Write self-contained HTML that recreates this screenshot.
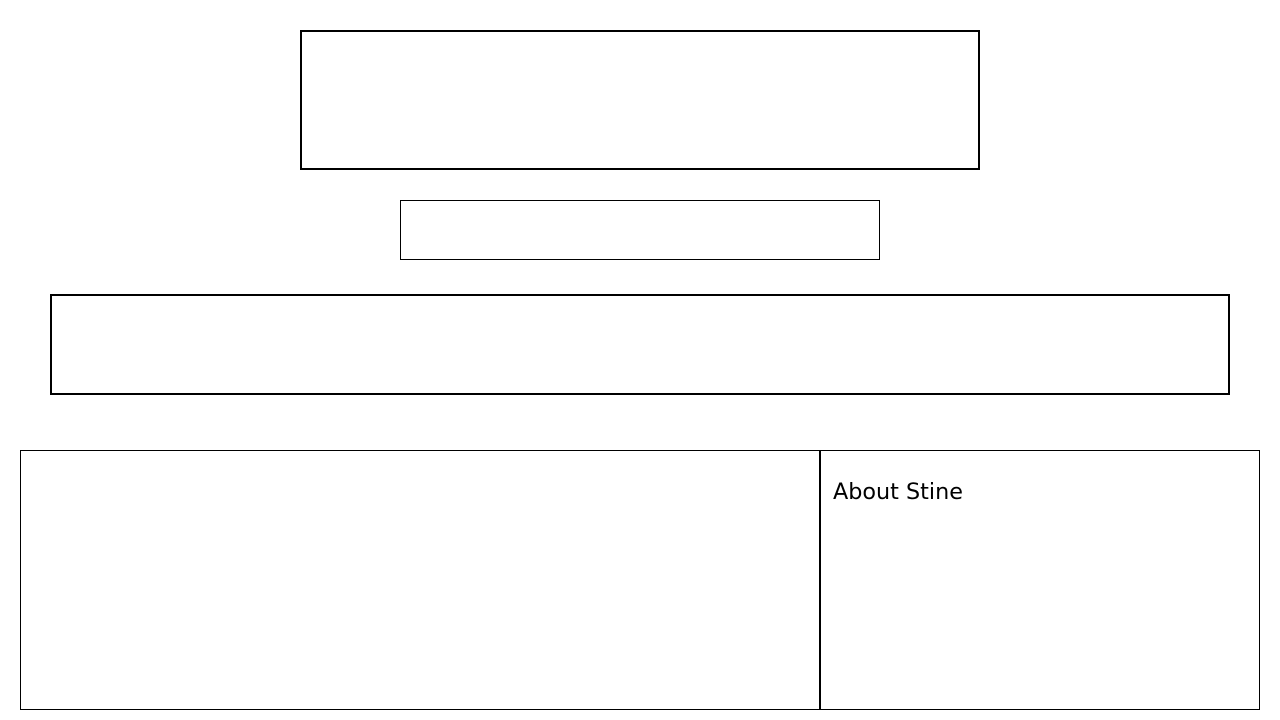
<!DOCTYPE html>
<html><head><style>
body{margin:0;width:1280px;height:720px;background:#fff;position:relative;overflow:hidden;font-family:"DejaVu Sans","Liberation Sans",sans-serif}
div{position:absolute;box-sizing:border-box;border:1px solid #000}
</style></head><body>
<div style="left:300px;top:30px;width:680px;height:140px;border-width:2px"></div>
<div style="left:400px;top:200px;width:480px;height:60px"></div>
<div style="left:50px;top:294px;width:1180px;height:101px;border-width:2px"></div>
<div style="left:20px;top:450px;width:801px;height:260px"></div>
<div style="left:819px;top:450px;width:441px;height:260px;border-left-width:2px"></div>
<span style="position:absolute;left:833px;top:478px;font-size:22.3px;line-height:28px;color:#000">About Stine</span>
</body></html>
